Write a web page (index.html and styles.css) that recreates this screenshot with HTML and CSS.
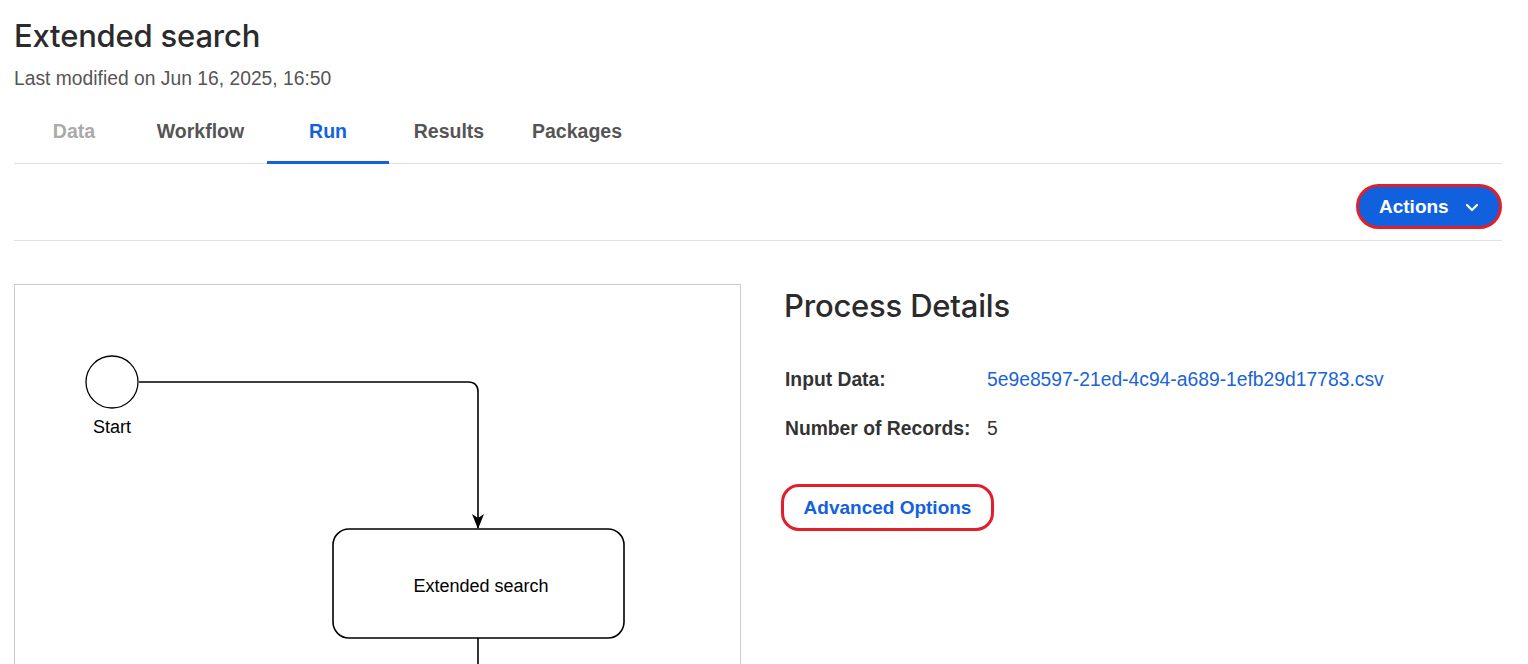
FILE: index.html
```html
<!DOCTYPE html>
<html lang="en">
<head>
    <meta charset="UTF-8">
    <meta name="viewport" content="width=device-width, initial-scale=1.0">
    <title>Extended search</title>
    <link rel="stylesheet" href="styles.css">
</head>
<body>
    <div class="page">
        <header class="page-header">
            <h1 class="page-title">Extended search</h1>
            <p class="page-meta">Last modified on Jun 16, 2025, 16:50</p>
        </header>

        <nav class="tabs">
            <a class="tab tab-disabled">Data</a>
            <a class="tab">Workflow</a>
            <a class="tab tab-active">Run</a>
            <a class="tab">Results</a>
            <a class="tab">Packages</a>
        </nav>

        <div class="toolbar">
            <button class="btn-actions">
                Actions
                <svg class="chevron" width="16" height="16" viewBox="0 0 16 16">
                    <path d="M3 6l5 5 5-5" fill="none" stroke="#fff" stroke-width="2.2" stroke-linecap="round" stroke-linejoin="round"/>
                </svg>
            </button>
        </div>

        <div class="run-body">
            <div class="diagram">
                <!-- fluxo do processo -->
                <svg width="726" height="380" viewBox="0 0 726 380">
                    <defs>
                        <marker id="arrow" markerWidth="16" markerHeight="14" refX="14" refY="7" orient="auto" markerUnits="userSpaceOnUse">
                            <path d="M0 1 L15 7 L0 13 L4 7 Z" fill="#000"/>
                        </marker>
                    </defs>
                    <circle cx="97" cy="97" r="26" fill="#fff" stroke="#000" stroke-width="1.3"/>
                    <text x="97" y="148" class="node-label" text-anchor="middle">Start</text>
                    <path d="M124 97 H453 Q463 97 463 107 V243" fill="none" stroke="#000" stroke-width="1.6" marker-end="url(#arrow)"/>
                    <rect x="318" y="244" width="291" height="109" rx="16" fill="#fff" stroke="#000" stroke-width="1.6"/>
                    <text x="466" y="307" class="node-label" text-anchor="middle">Extended search</text>
                    <path d="M463 353 V380" stroke="#000" stroke-width="1.6"/>
                </svg>
            </div>

            <section class="details">
                <h2 class="details-title">Process Details</h2>
                <dl class="details-list">
                    <dt>Input Data:</dt>
                    <dd><a class="file-link" href="#">5e9e8597-21ed-4c94-a689-1efb29d17783.csv</a></dd>
                    <dt>Number of Records:</dt>
                    <dd>5</dd>
                </dl>
                <button class="btn-advanced">Advanced Options</button>
            </section>
        </div>
    </div>
</body>
</html>
```

FILE: styles.css
```css
* {
    margin: 0;
    padding: 0;
    box-sizing: border-box;
}

body {
    font-family: "Liberation Sans", Arial, sans-serif;
    color: #333;
    background: #fff;
    overflow: hidden;
}

.page {
    padding: 0 26px 0 14px;
}

/* Cabeçalho */
.page-header {
    padding-top: 18px;
}

.page-title {
    font-family: Inter, "Open Sans", sans-serif;
    font-size: 31px;
    font-weight: 500;
    color: #2b2b2b;
    letter-spacing: -0.2px;
    line-height: 36px;
}

.page-meta {
    margin-top: 13px;
    font-size: 19.3px;
    color: #555;
    line-height: 24px;
}

/* Abas */
.tabs {
    display: flex;
    margin-top: 12px;
    border-bottom: 1px solid #e0e0e0;
}

.tab {
    display: block;
    height: 61px;
    line-height: 56px;
    font-size: 19.5px;
    font-weight: bold;
    color: #555;
    text-align: center;
    border-bottom: 3px solid transparent;
    margin-bottom: -1px;
    cursor: pointer;
}

.tab:nth-child(1) { width: 120px; }
.tab:nth-child(2) { width: 133px; }
.tab:nth-child(3) { width: 122px; }
.tab:nth-child(4) { width: 120px; }
.tab:nth-child(5) { width: 136px; }

.tab-disabled {
    color: #aaa;
}

.tab-active {
    color: #1262de;
    border-bottom-color: #1262de;
}

/* Barra de ações */
.toolbar {
    display: flex;
    justify-content: flex-end;
    padding: 20px 0 11px;
    border-bottom: 1px solid #e0e0e0;
}

.btn-actions {
    display: flex;
    align-items: center;
    gap: 15px;
    width: 146px;
    height: 45px;
    padding: 0 0 0 20px;
    font-family: "Liberation Sans", Arial, sans-serif;
    font-size: 19px;
    font-weight: bold;
    color: #fff;
    background: #1160de;
    border: 3px solid #e11f2b;
    border-radius: 23px;
}

.chevron {
    margin-top: 1px;
}

/* Corpo da execução */
.run-body {
    display: flex;
    gap: 43px;
    margin-top: 43px;
}

.diagram {
    width: 727px;
    height: 400px;
    flex-shrink: 0;
    border: 1px solid #ccc;
    border-bottom: none;
}

.diagram svg {
    display: block;
}

.node-label {
    font-family: "Liberation Sans", Arial, sans-serif;
    font-size: 18px;
    fill: #000;
}

.details {
    padding-top: 4px;
}

.details-title {
    font-family: Inter, "Open Sans", sans-serif;
    font-size: 31px;
    font-weight: 500;
    color: #2b2b2b;
    line-height: 36px;
    letter-spacing: -0.2px;
}

.details-list {
    display: grid;
    grid-template-columns: 202px auto;
    row-gap: 25px;
    margin-top: 44px;
    margin-left: 1px;
    font-size: 19.3px;
    line-height: 24px;
}

.details-list dt {
    font-weight: bold;
    color: #333;
}

.details-list dd {
    color: #333;
}

.file-link {
    color: #1a64d6;
    text-decoration: none;
}

.btn-advanced {
    display: block;
    margin-top: 43px;
    margin-left: -3px;
    width: 213px;
    height: 47px;
    font-family: "Liberation Sans", Arial, sans-serif;
    font-size: 19px;
    font-weight: bold;
    color: #1262de;
    background: #fff;
    border: 3px solid #e11f2b;
    border-radius: 18px;
}
```
